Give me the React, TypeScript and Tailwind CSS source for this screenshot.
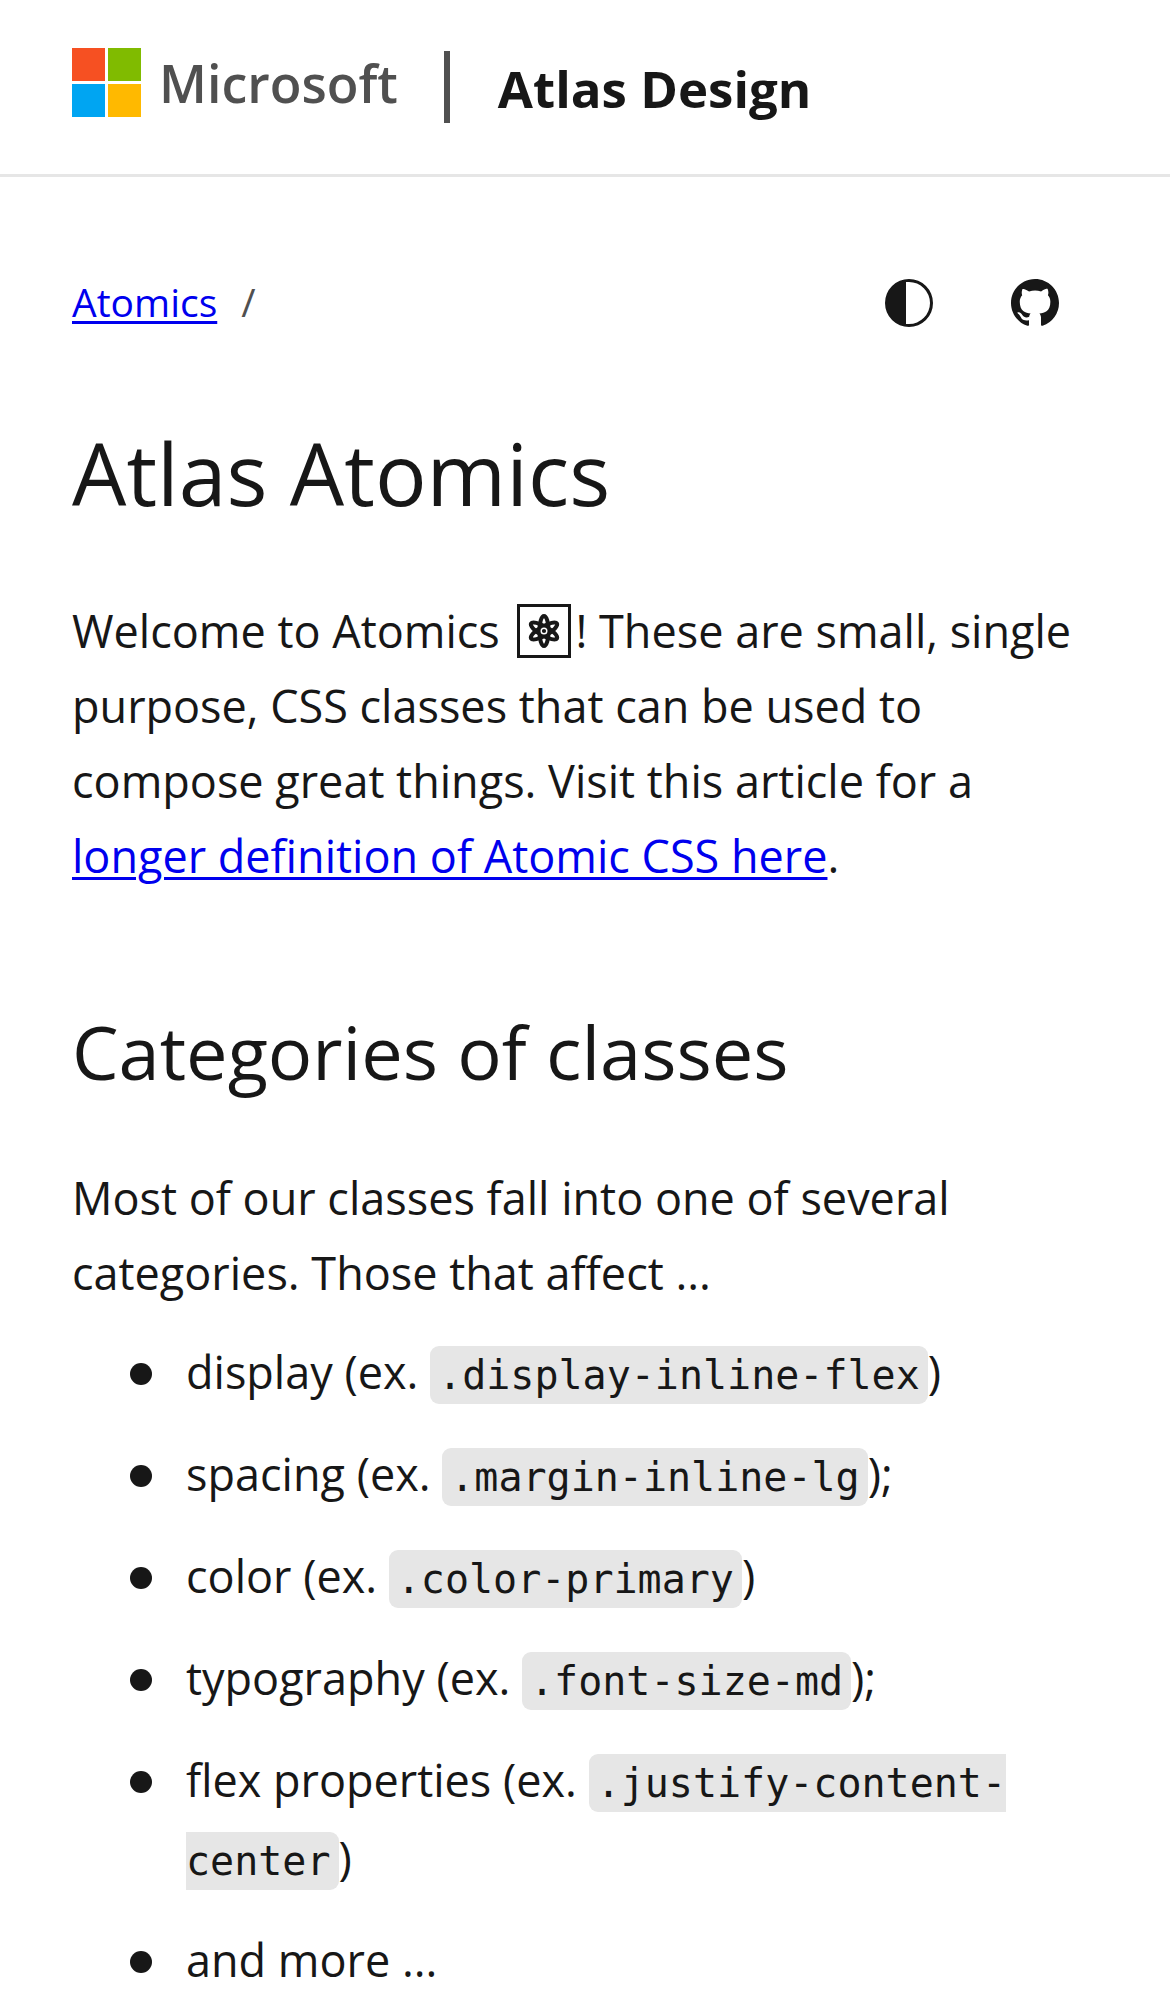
import type { ReactNode } from "react";

function MicrosoftLogo() {
  return (
    <a href="#microsoft" className="flex h-[69px] items-center gap-[18px] text-[#505050]">
      <span className="grid grid-cols-2 gap-[3px]" aria-hidden="true">
        <span className="size-[33px] bg-[#f65022]" />
        <span className="size-[33px] bg-[#80bb00]" />
        <span className="size-[33px] bg-[#00a5f2]" />
        <span className="size-[33px] bg-[#ffb900]" />
      </span>
      <span className="text-[52px] leading-[69px] font-semibold">Microsoft</span>
    </a>
  );
}

function ContrastIcon() {
  return (
    <svg viewBox="0 0 16 16" className="size-12" fill="currentColor" aria-hidden="true">
      <path d="M8 0a8 8 0 1 0 0 16A8 8 0 0 0 8 0ZM7 1h1a7 7 0 0 1 0 14H7Z" fillRule="evenodd" />
    </svg>
  );
}

function GithubIcon() {
  return (
    <svg viewBox="0 0 16 16" className="size-12" fill="currentColor" aria-hidden="true">
      <path d="M8 0C3.58 0 0 3.58 0 8c0 3.54 2.29 6.53 5.47 7.59.4.07.55-.17.55-.38 0-.19-.01-.82-.01-1.49-2.01.37-2.53-.49-2.69-.94-.09-.23-.48-.94-.82-1.13-.28-.15-.68-.52-.01-.53.63-.01 1.08.58 1.23.82.72 1.21 1.87.87 2.33.66.07-.52.28-.87.51-1.07-1.78-.2-3.64-.89-3.64-3.95 0-.87.31-1.59.82-2.15-.08-.2-.36-1.02.08-2.12 0 0 .67-.21 2.2.82.64-.18 1.32-.27 2-.27s1.36.09 2 .27c1.53-1.04 2.2-.82 2.2-.82.44 1.1.16 1.92.08 2.12.51.56.82 1.27.82 2.15 0 3.07-1.87 3.75-3.65 3.95.29.25.54.73.54 1.48 0 1.07-.01 1.93-.01 2.2 0 .21.15.46.55.38A8.01 8.01 0 0 0 16 8c0-4.42-3.58-8-8-8Z" />
    </svg>
  );
}

function AtomSymbol() {
  return (
    <svg
      viewBox="0 0 54 54"
      className="mx-[5px] inline-block size-[54px] align-[-10px]"
      fill="none"
      stroke="currentColor"
      strokeWidth="4"
      role="img"
      aria-label="atom"
    >
      <rect x="1.5" y="1.5" width="51" height="51" strokeWidth="3" />
      <ellipse cx="27" cy="27" rx="4.6" ry="15" />
      <ellipse cx="27" cy="27" rx="4.6" ry="15" transform="rotate(60 27 27)" />
      <ellipse cx="27" cy="27" rx="4.6" ry="15" transform="rotate(120 27 27)" />
      <circle cx="27" cy="27" r="6" fill="currentColor" stroke="none" />
      <circle cx="27" cy="27" r="2.8" stroke="#fff" strokeWidth="1.4" />
    </svg>
  );
}

function Item({ children }: { children: ReactNode }) {
  return (
    <li className="flex gap-[34px] before:mt-[30px] before:size-[22px] before:shrink-0 before:rounded-full before:bg-current before:content-['']">
      <div>{children}</div>
    </li>
  );
}

function Code({ children }: { children: ReactNode }) {
  return (
    <code className="rounded-[9px] bg-[#e6e6e6] px-2 py-[6px] font-['DejaVu_Sans_Mono',monospace] text-[40px] leading-none">
      {children}
    </code>
  );
}

const categories = [
  { name: "display", example: ".display-inline-flex", end: ")" },
  { name: "spacing", example: ".margin-inline-lg", end: ");" },
  { name: "color", example: ".color-primary", end: ")" },
  { name: "typography", example: ".font-size-md", end: ");" },
  { name: "flex properties", example: ".justify-content-center", end: ")" },
];

export default function App() {
  return (
    <div className="min-h-screen bg-white font-['Open_Sans',sans-serif] text-[45px] leading-[75px] text-[#171717]">
      <header className="flex items-start border-b-3 border-[#e6e6e6] px-[72px] pt-12 pb-[50px]">
        <MicrosoftLogo />
        <span className="mt-[3px] ml-[46px] h-[72px] w-[6px] bg-[#505050]" aria-hidden="true" />
        <a href="#home" className="mt-1 ml-12 text-[51px] leading-[72px] font-bold">
          Atlas Design
        </a>
      </header>

      <main className="px-[72px] pt-[63px]">
        <div className="flex items-center justify-between">
          <nav aria-label="Breadcrumb" className="flex gap-6 pb-1 text-[39px]">
            <a href="#atomics" className="text-[#0000ee] underline decoration-[3px] underline-offset-[4px]">
              Atomics
            </a>
            <span className="text-[#505050]">/</span>
          </nav>
          <div className="flex">
            <button type="button" aria-label="Theme" className="p-[39px]">
              <ContrastIcon />
            </button>
            <a href="#github" aria-label="GitHub" className="p-[39px]">
              <GithubIcon />
            </a>
          </div>
        </div>

        <h1 className="mt-12 text-[86px] leading-[117px]">Atlas Atomics</h1>
        <p className="mt-[62px]">
          Welcome to Atomics <AtomSymbol />! These are small, single purpose, CSS classes that can be used to
          compose great things. Visit this article for a{" "}
          <a href="#definition" className="text-[#0000ee] underline decoration-[3px] underline-offset-[4px]">
            longer definition of Atomic CSS here
          </a>
          .
        </p>

        <h2 className="mt-[108px] text-[74px] leading-[102px]">Categories of classes</h2>
        <p className="mt-[57px]">Most of our classes fall into one of several categories. Those that affect ...</p>
        <ul className="mt-[23px] flex flex-col gap-6 pl-[58px] leading-[78px]">
          {categories.map((c) => (
            <Item key={c.name}>
              {c.name} (ex. <Code>{c.example}</Code>
              {c.end}
            </Item>
          ))}
          <Item>and more ...</Item>
        </ul>
      </main>
    </div>
  );
}
